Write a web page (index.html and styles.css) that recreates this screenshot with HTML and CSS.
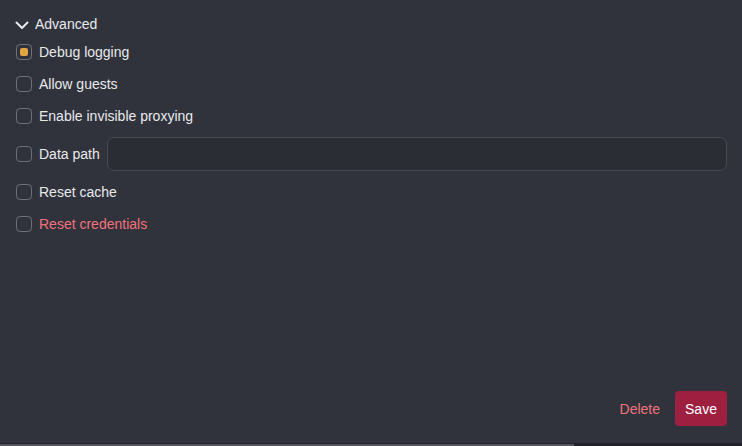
FILE: index.html
```html
<!DOCTYPE html>
<html>
<head>
<meta charset="utf-8">
<link rel="stylesheet" href="styles.css">
</head>
<body>
<div class="page">
  <div class="panel">
    <div class="header">
      <svg class="chevron" width="14" height="10" viewBox="0 0 14 10"><path d="M1.5 2.5 L7 8 L12.5 2.5" fill="none" stroke="#e8e9ec" stroke-width="2" stroke-linecap="round" stroke-linejoin="round"/></svg>
      <span>Advanced</span>
    </div>
    <div class="list">
      <label class="row"><span class="box checked"><span class="dot"></span></span><span class="label">Debug logging</span></label>
      <label class="row"><span class="box"></span><span class="label">Allow guests</span></label>
      <label class="row"><span class="box"></span><span class="label">Enable invisible proxying</span></label>
      <div class="row tall"><span class="box"></span><span class="label">Data path</span><input class="field" type="text"></div>
      <label class="row"><span class="box"></span><span class="label">Reset cache</span></label>
      <label class="row"><span class="box"></span><span class="label danger">Reset credentials</span></label>
    </div>
    <div class="footer">
      <span class="delete">Delete</span>
      <button class="save">Save</button>
    </div>
  </div>
  <div class="scroll"><div class="thumb"></div></div>
</div>
</body>
</html>
```
FILE: styles.css
```css
html, body {
  margin: 0;
  padding: 0;
  background: #30333c;
  font-family: "Liberation Sans", Arial, sans-serif;
  font-size: 14px;
  color: #e8e9ec;
}
.page {
  width: 742px;
  height: 446px;
  display: flex;
  flex-direction: column;
  overflow: hidden;
}
.panel {
  flex: 1;
  display: flex;
  flex-direction: column;
  padding: 12px 15px 17px 16px;
}
.header {
  height: 24px;
  display: flex;
  align-items: center;
  gap: 6px;
}
.chevron {
  margin-left: -1px;
  margin-top: 1px;
}
.list {
  display: flex;
  flex-direction: column;
}
.row {
  height: 32px;
  display: flex;
  align-items: center;
}
.row.tall {
  height: 44px;
}
.box {
  width: 14px;
  height: 14px;
  border: 1px solid #6c6f77;
  border-radius: 4px;
  box-sizing: content-box;
  display: flex;
  align-items: center;
  justify-content: center;
  flex: none;
}
.dot {
  width: 8px;
  height: 8px;
  border-radius: 2px;
  background: #e0a443;
}
.label {
  margin-left: 7px;
}
.danger {
  color: #f3727a;
}
.field {
  margin-left: 7px;
  flex: 1;
  height: 34px;
  box-sizing: border-box;
  background: #2a2d34;
  border: 1px solid #474a52;
  border-radius: 7px;
  outline: none;
  color: #e8e9ec;
}
.footer {
  margin-top: auto;
  display: flex;
  justify-content: flex-end;
  align-items: center;
  gap: 15px;
}
.delete {
  color: #f3727a;
}
.save {
  width: 52px;
  height: 35px;
  background: #9e1f40;
  color: #ffffff;
  border: none;
  border-radius: 4px;
  font-family: "Liberation Sans", Arial, sans-serif;
  font-size: 14px;
  padding: 0;
}
.scroll {
  height: 3px;
  background: #222328;
  display: flex;
  align-items: flex-end;
}
.thumb {
  width: 574px;
  height: 2px;
  background: #55575d;
}
```
